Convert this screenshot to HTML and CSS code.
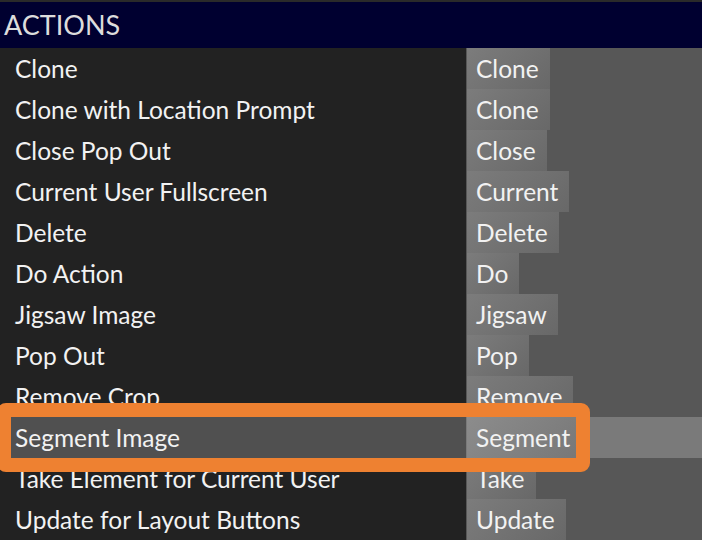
FILE: index.html
```html
<!DOCTYPE html>
<html>
<head>
<meta charset="utf-8">
<link rel="stylesheet" href="styles.css">
</head>
<body>
<div class="panel">
  <div class="topline"></div>
  <div class="header">ACTIONS</div>
  <div class="rows">
    <div class="row"><div class="name">Clone</div><div class="val"><span class="chip">Clone</span></div></div>
    <div class="row"><div class="name">Clone with Location Prompt</div><div class="val"><span class="chip">Clone</span></div></div>
    <div class="row"><div class="name">Close Pop Out</div><div class="val"><span class="chip">Close</span></div></div>
    <div class="row"><div class="name">Current User Fullscreen</div><div class="val"><span class="chip">Current</span></div></div>
    <div class="row"><div class="name">Delete</div><div class="val"><span class="chip">Delete</span></div></div>
    <div class="row"><div class="name">Do Action</div><div class="val"><span class="chip">Do</span></div></div>
    <div class="row"><div class="name">Jigsaw Image</div><div class="val"><span class="chip">Jigsaw</span></div></div>
    <div class="row"><div class="name">Pop Out</div><div class="val"><span class="chip">Pop</span></div></div>
    <div class="row"><div class="name">Remove Crop</div><div class="val"><span class="chip">Remove</span></div></div>
    <div class="row selected"><div class="name">Segment Image</div><div class="val"><span class="chip">Segment</span></div><div class="focus"></div></div>
    <div class="row"><div class="name">Take Element for Current User</div><div class="val"><span class="chip">Take</span></div></div>
    <div class="row"><div class="name">Update for Layout Buttons</div><div class="val"><span class="chip">Update</span></div></div>
  </div>
</div>
</body>
</html>
```
FILE: styles.css
```css
* { box-sizing: border-box; }
html, body { margin: 0; padding: 0; background: #222222; overflow: hidden; }
.panel {
  position: relative;
  width: 702px;
  height: 540px;
  font-family: "Lato", "Noto Sans", sans-serif;
  color: #f2f2f2;
}
.topline { height: 2px; background: #2a2a2a; }
.header {
  height: 46px;
  background: #000030;
  color: #dcdcdc;
  font-size: 27px;
  line-height: 46px;
  padding-left: 4px;
}
.rows { display: flex; flex-direction: column; }
.row {
  position: relative;
  height: 41px;
  display: flex;
}
.name {
  width: 466px;
  background: #222222;
  font-size: 24.5px;
  line-height: 41px;
  padding-left: 15px;
  white-space: nowrap;
}
.val {
  flex: 1;
  background: #575757;
  display: flex;
}
.chip {
  display: block;
  margin-left: 1px;
  padding: 0 11px 0 9px;
  font-size: 24.5px;
  line-height: 41px;
  background: linear-gradient(135deg, #7c7c7c, #686868);
}
.selected .name { background: #505050; }
.selected .val { background: #7a7a7a; }
.selected .chip { background: linear-gradient(135deg, #8c8c8c, #777777); }
.focus {
  position: absolute;
  z-index: 10;
  left: -3px;
  top: -14px;
  width: 593px;
  height: 69px;
  border: 14px solid #ee8131;
  border-radius: 9px;
}
```
